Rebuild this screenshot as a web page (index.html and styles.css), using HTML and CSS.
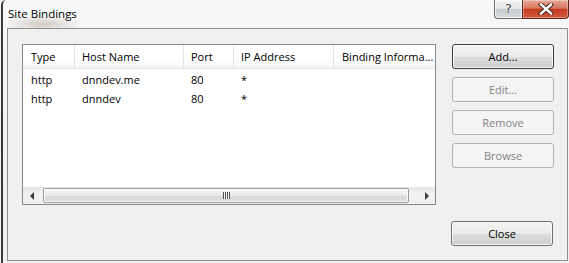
FILE: index.html
```html
<!DOCTYPE html>
<html lang="en">
<head>
    <meta charset="UTF-8">
    <title>Site Bindings</title>
    <link rel="stylesheet" href="styles.css">
</head>
<body>
    <div class="window">
        <div class="titlebar">
            <span class="title">Site Bindings</span>
            <div class="caption-buttons">
                <span class="cap-help">?</span>
                <span class="cap-close">
                    <svg width="16" height="12" viewBox="0 0 16 12">
                        <path d="M3 1.5 L13 10.5 M13 1.5 L3 10.5" stroke="#4a2a22" stroke-width="4.4" stroke-linecap="square"/>
                        <path d="M3 1.5 L13 10.5 M13 1.5 L3 10.5" stroke="#ffffff" stroke-width="2.4" stroke-linecap="square"/>
                    </svg>
                </span>
            </div>
        </div>

        <div class="client">
            <div class="main">
                <div class="listview">
                    <div class="lv-row lv-header">
                        <div class="col col-type">Type</div>
                        <div class="col col-host">Host Name</div>
                        <div class="col col-port">Port</div>
                        <div class="col col-ip">IP Address</div>
                        <div class="col col-info">Binding Informa...</div>
                    </div>
                    <div class="lv-body">
                        <div class="lv-row">
                            <div class="col col-type">http</div>
                            <div class="col col-host">dnndev.me</div>
                            <div class="col col-port">80</div>
                            <div class="col col-ip">*</div>
                            <div class="col col-info"></div>
                        </div>
                        <div class="lv-row">
                            <div class="col col-type">http</div>
                            <div class="col col-host">dnndev</div>
                            <div class="col col-port">80</div>
                            <div class="col col-ip">*</div>
                            <div class="col col-info"></div>
                        </div>
                    </div>
                    <div class="hscroll">
                        <div class="sb-arrow"><span class="tri-left"></span></div>
                        <div class="sb-track">
                            <div class="sb-thumb"><span class="grip"></span></div>
                        </div>
                        <div class="sb-arrow"><span class="tri-right"></span></div>
                    </div>
                </div>

                <div class="side-buttons">
                    <button class="btn btn-default">Add...</button>
                    <button class="btn" disabled>Edit...</button>
                    <button class="btn" disabled>Remove</button>
                    <button class="btn" disabled>Browse</button>
                </div>
            </div>

            <div class="footer">
                <button class="btn">Close</button>
            </div>
        </div>
    </div>
</body>
</html>
```

FILE: styles.css
```css
* {
    box-sizing: border-box;
}

body {
    margin: 0;
    padding: 0;
    width: 569px;
    height: 263px;
    overflow: hidden;
    font-family: "Open Sans", "Noto Sans", sans-serif;
    font-size: 11px;
    color: #000;
    background-color: #f4f5f6;
}

.window {
    margin-left: 1px;
    width: 568px;
    height: 263px;
    padding: 0 1px 2px 4px;
    border-left: 2px solid #3a3a3a;
    border-top-left-radius: 5px;
    background: radial-gradient(ellipse 40px 10px at 40px 24px, rgba(150, 120, 100, 0.35), rgba(150, 120, 100, 0) 100%),
                linear-gradient(to bottom, #f7f8f9, #eef0f1);
}

.titlebar {
    height: 28px;
    display: flex;
    align-items: flex-start;
    justify-content: space-between;
}

.title {
    margin-top: 5px;
    margin-left: 1px;
    font-size: 11.5px;
    line-height: 18px;
    text-shadow: 0 0 6px #fff, 0 0 3px #fff;
}

.caption-buttons {
    display: flex;
    margin-right: -1px;
}

.cap-help {
    width: 28px;
    height: 19px;
    border: 1px solid #6d6d6d;
    border-top: none;
    border-right: none;
    border-bottom-left-radius: 4px;
    background: linear-gradient(to bottom, #f4f5f6 0%, #e2e4e7 50%, #c9cdd2 51%, #d7dadf 100%);
    color: #4a4a4a;
    font-family: "DejaVu Sans", sans-serif;
    font-size: 13px;
    line-height: 18px;
    text-align: center;
    text-shadow: 0 0 2px #fff;
    box-shadow: inset 0 0 0 1px rgba(255, 255, 255, 0.7);
}

.cap-close {
    width: 47px;
    height: 19px;
    border: 1px solid #5b2518;
    border-top: none;
    border-bottom-right-radius: 4px;
    background: linear-gradient(to bottom, #e9a898 0%, #d9775f 45%, #c43c22 52%, #d4593f 100%);
    display: flex;
    align-items: center;
    justify-content: center;
    box-shadow: inset 0 0 0 1px rgba(255, 255, 255, 0.35);
}

.client {
    height: 233px;
    border: 1px solid #8e8f8f;
    background-color: #f0f0f0;
    padding: 15px 13px 13px 14px;
}

.main {
    display: flex;
    gap: 16px;
    height: 161px;
}

.listview {
    width: 414px;
    border: 1px solid #828790;
    background-color: #fff;
    display: flex;
    flex-direction: column;
}

.lv-row {
    display: flex;
    height: 19px;
    line-height: 19px;
    white-space: nowrap;
}

.lv-header {
    height: 24px;
    line-height: 23px;
    border-bottom: 1px solid #e3e4e6;
    background: linear-gradient(to bottom, #ffffff 0%, #ffffff 60%, #f3f4f6 100%);
}

.lv-body {
    flex: 1;
    padding-top: 1px;
}

.col {
    padding-left: 7px;
    overflow: hidden;
}

.lv-header .col {
    border-right: 1px solid #e3e4e6;
}

.col-type { width: 52px; padding-left: 8px; }
.col-host { width: 109px; }
.col-port { width: 50px; }
.col-ip { width: 100px; }
.col-info { flex: 1; padding-left: 8px; }

.lv-header .col-info { border-right: none; }

.hscroll {
    height: 17px;
    display: flex;
    background: linear-gradient(to bottom, #e4e4e4, #f2f2f2 40%, #f0f0f0);
}

.sb-arrow {
    width: 17px;
    display: flex;
    align-items: center;
    justify-content: center;
}

.tri-left {
    width: 0;
    height: 0;
    border-top: 4px solid transparent;
    border-bottom: 4px solid transparent;
    border-right: 4px solid #3d3d3d;
}

.tri-right {
    width: 0;
    height: 0;
    border-top: 4px solid transparent;
    border-bottom: 4px solid transparent;
    border-left: 4px solid #3d3d3d;
}

.sb-track {
    flex: 1;
    display: flex;
    padding: 1px 9px 1px 3px;
}

.sb-thumb {
    flex: 1;
    border: 1px solid #9b9b9b;
    border-radius: 2px;
    background: linear-gradient(to bottom, #f6f6f6 0%, #eaeaea 50%, #d9d9d9 51%, #dcdcdc 100%);
    display: flex;
    align-items: center;
    justify-content: center;
    box-shadow: inset 0 0 0 1px rgba(255, 255, 255, 0.8);
}

.grip {
    width: 7px;
    height: 7px;
    background: repeating-linear-gradient(to right, #555 0, #555 1px, #f6f6f6 1px, #f6f6f6 2px);
}

.side-buttons {
    width: 102px;
    display: flex;
    flex-direction: column;
    gap: 8px;
}

.btn {
    width: 102px;
    height: 25px;
    padding: 0;
    border: 1px solid #707070;
    border-radius: 3px;
    background: linear-gradient(to bottom, #f2f2f2 0%, #ebebeb 50%, #dddddd 51%, #cfcfcf 100%);
    box-shadow: inset 0 0 0 1px rgba(255, 255, 255, 0.75);
    font-family: "Open Sans", "Noto Sans", sans-serif;
    font-size: 11px;
    color: #000;
}

.btn-default {
    border-color: #3c3c3c;
}

.btn:disabled {
    border-color: #adb2b5;
    background: #f4f4f4;
    color: #838383;
    box-shadow: none;
}

.footer {
    margin-top: 16px;
    display: flex;
    justify-content: flex-end;
    padding-right: 1px;
}
```
